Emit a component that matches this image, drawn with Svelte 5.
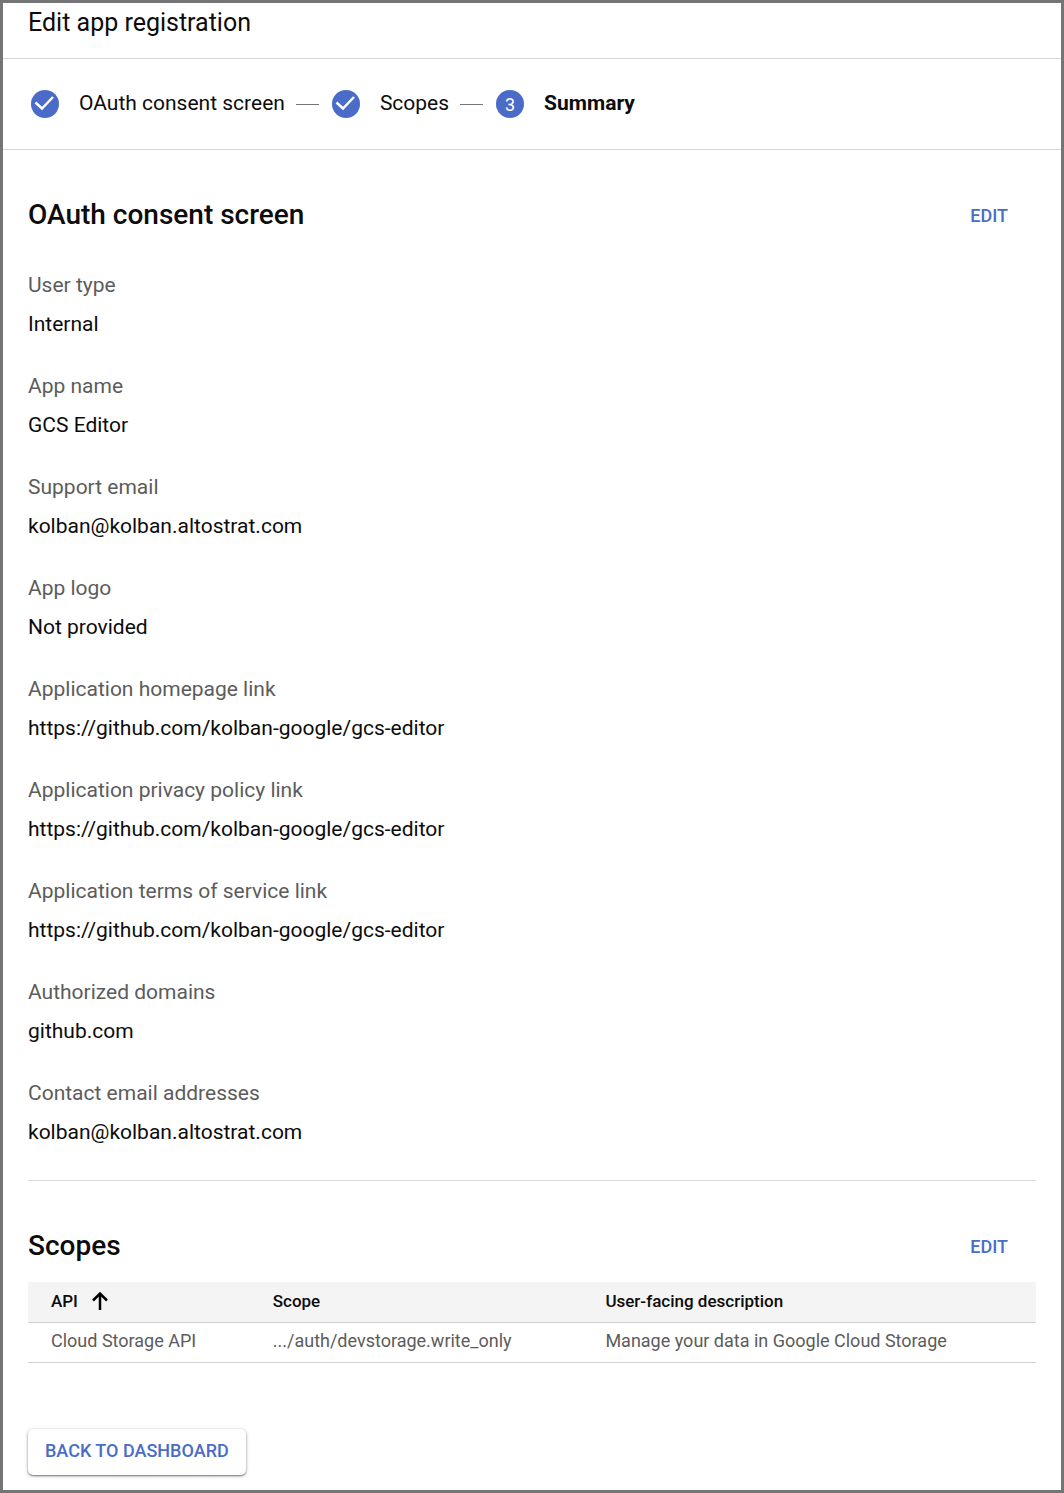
<script>
  const steps = [
    { label: 'OAuth consent screen', done: true },
    { label: 'Scopes', done: true },
    { label: 'Summary', done: false }
  ];

  const repo = 'https://github.com/kolban-google/gcs-editor';
  const fields = [
    ['User type', 'Internal'],
    ['App name', 'GCS Editor'],
    ['Support email', 'kolban@kolban.altostrat.com'],
    ['App logo', 'Not provided'],
    ['Application homepage link', repo],
    ['Application privacy policy link', repo],
    ['Application terms of service link', repo],
    ['Authorized domains', 'github.com'],
    ['Contact email addresses', 'kolban@kolban.altostrat.com']
  ];

  const scopes = [
    {
      api: 'Cloud Storage API',
      scope: '.../auth/devstorage.write_only',
      description: 'Manage your data in Google Cloud Storage'
    }
  ];
</script>

<div class="page">
  <header>
    <h1>Edit app registration</h1>
  </header>

  <ol class="stepper">
    {#each steps as step, i}
      <li class:current={!step.done} aria-current={step.done ? undefined : 'step'}>
        <span class="badge">
          {#if step.done}
            <svg viewBox="0 0 28 28" width="28" height="28" aria-hidden="true">
              <path d="M4.500 12.500L11 18.500L22 7" fill="none" stroke="#fff" stroke-width="2.500" />
            </svg>
          {:else}
            {i + 1}
          {/if}
        </span>
        <span class="label">{step.label}</span>
      </li>
    {/each}
  </ol>

  <main>
    <section class="consent">
      <div class="heading">
        <h2>OAuth consent screen</h2>
        <button class="edit" type="button" aria-label="Edit OAuth consent screen">EDIT</button>
      </div>
      <dl>
        {#each fields as [name, value]}
          <div class="field">
            <dt>{name}</dt>
            <dd>{value}</dd>
          </div>
        {/each}
      </dl>
    </section>

    <section class="scopes">
      <div class="heading">
        <h2>Scopes</h2>
        <button class="edit" type="button" aria-label="Edit scopes">EDIT</button>
      </div>
      <table>
        <thead>
          <tr>
            <th class="api" aria-sort="ascending">
              <button class="sort" type="button">
                API
                <svg viewBox="0 0 18 20" width="18" height="20" aria-hidden="true">
                  <path d="M9 19V3M2 9.500L9 2.500L16 9.500" fill="none" stroke="#000" stroke-width="2.500" />
                </svg>
              </button>
            </th>
            <th class="scope">Scope</th>
            <th>User-facing description</th>
          </tr>
        </thead>
        <tbody>
          {#each scopes as row}
            <tr>
              <td>{row.api}</td>
              <td>{row.scope}</td>
              <td>{row.description}</td>
            </tr>
          {/each}
        </tbody>
      </table>
    </section>

    <button class="back" type="button">BACK TO DASHBOARD</button>
  </main>
</div>

<style>
  :global(body) {
    background: #fff;
  }

  .page {
    box-sizing: border-box;
    min-height: 100vh;
    border: 3px solid #757575;
    background: #fff;
    color: #0c0c0c;
    font-family: Roboto, Arial, sans-serif;
    font-size: 21px;
  }

  h1,
  h2,
  dl,
  dd,
  ol {
    margin: 0;
    padding: 0;
  }

  button {
    border: 0;
    padding: 0;
    background: none;
    font-family: inherit;
    cursor: pointer;
  }

  header {
    padding: 0 25px 15px;
    border-bottom: 1px solid #d6d6d6;
  }

  h1 {
    font-size: 25px;
    font-weight: 400;
    line-height: 40px;
  }

  .stepper {
    display: flex;
    align-items: center;
    padding: 0 28px;
    height: 90px;
    border-bottom: 1px solid #d6d6d6;
    list-style: none;
  }

  .stepper li {
    display: flex;
    align-items: center;
    white-space: nowrap;
  }

  .stepper li:not(:last-child)::after {
    content: '';
    width: 23px;
    margin: 0 13px 0 11px;
    border-top: 1px solid #757575;
  }

  .label {
    padding-bottom: 2px;
    line-height: 26px;
  }

  .badge {
    display: flex;
    align-items: center;
    justify-content: center;
    width: 28px;
    height: 28px;
    margin-right: 20px;
    border-radius: 50%;
    background: #4a6cc8;
    color: #fff;
    font-size: 18px;
    font-weight: 400;
  }

  .current {
    font-weight: 700;
  }

  main {
    padding: 0 25px 15px;
  }

  .heading {
    display: flex;
    align-items: center;
    justify-content: space-between;
    padding-right: 28px;
    line-height: 40px;
  }

  h2 {
    font-size: 28px;
    font-weight: 500;
  }

  .edit,
  .back {
    color: #4a6cc8;
    font-size: 18px;
    font-weight: 500;
  }

  .consent {
    padding: 45px 0 28px;
    border-bottom: 1px solid #dcdcdc;
  }

  dl {
    display: grid;
    gap: 23px;
    padding-top: 31px;
  }

  dt,
  dd {
    line-height: 39px;
  }

  dt {
    color: #5c5c5c;
  }

  .scopes {
    padding-top: 45px;
  }

  table {
    width: 100%;
    margin-top: 16px;
    border-collapse: collapse;
    table-layout: fixed;
  }

  th,
  td {
    box-sizing: border-box;
    height: 40px;
    padding: 0 0 2px 23px;
    border-bottom: 1px solid #d0d0d0;
    text-align: left;
  }

  th {
    background: #f4f4f4;
    font-size: 17px;
    font-weight: 500;
  }

  td {
    padding-bottom: 3px;
    color: #5c5c5c;
    font-size: 18px;
  }

  .api {
    width: 22%;
  }

  .scope {
    width: 33%;
  }

  .sort {
    display: flex;
    align-items: center;
    gap: 13px;
    color: inherit;
    font-size: inherit;
    font-weight: inherit;
  }

  .back {
    height: 46px;
    margin-top: 66px;
    padding: 0 17px 2px;
    border-radius: 5px;
    background: #fff;
    box-shadow:
      0 1px 2px rgba(0, 0, 0, 0.5),
      0 1px 5px rgba(0, 0, 0, 0.14);
  }
</style>
